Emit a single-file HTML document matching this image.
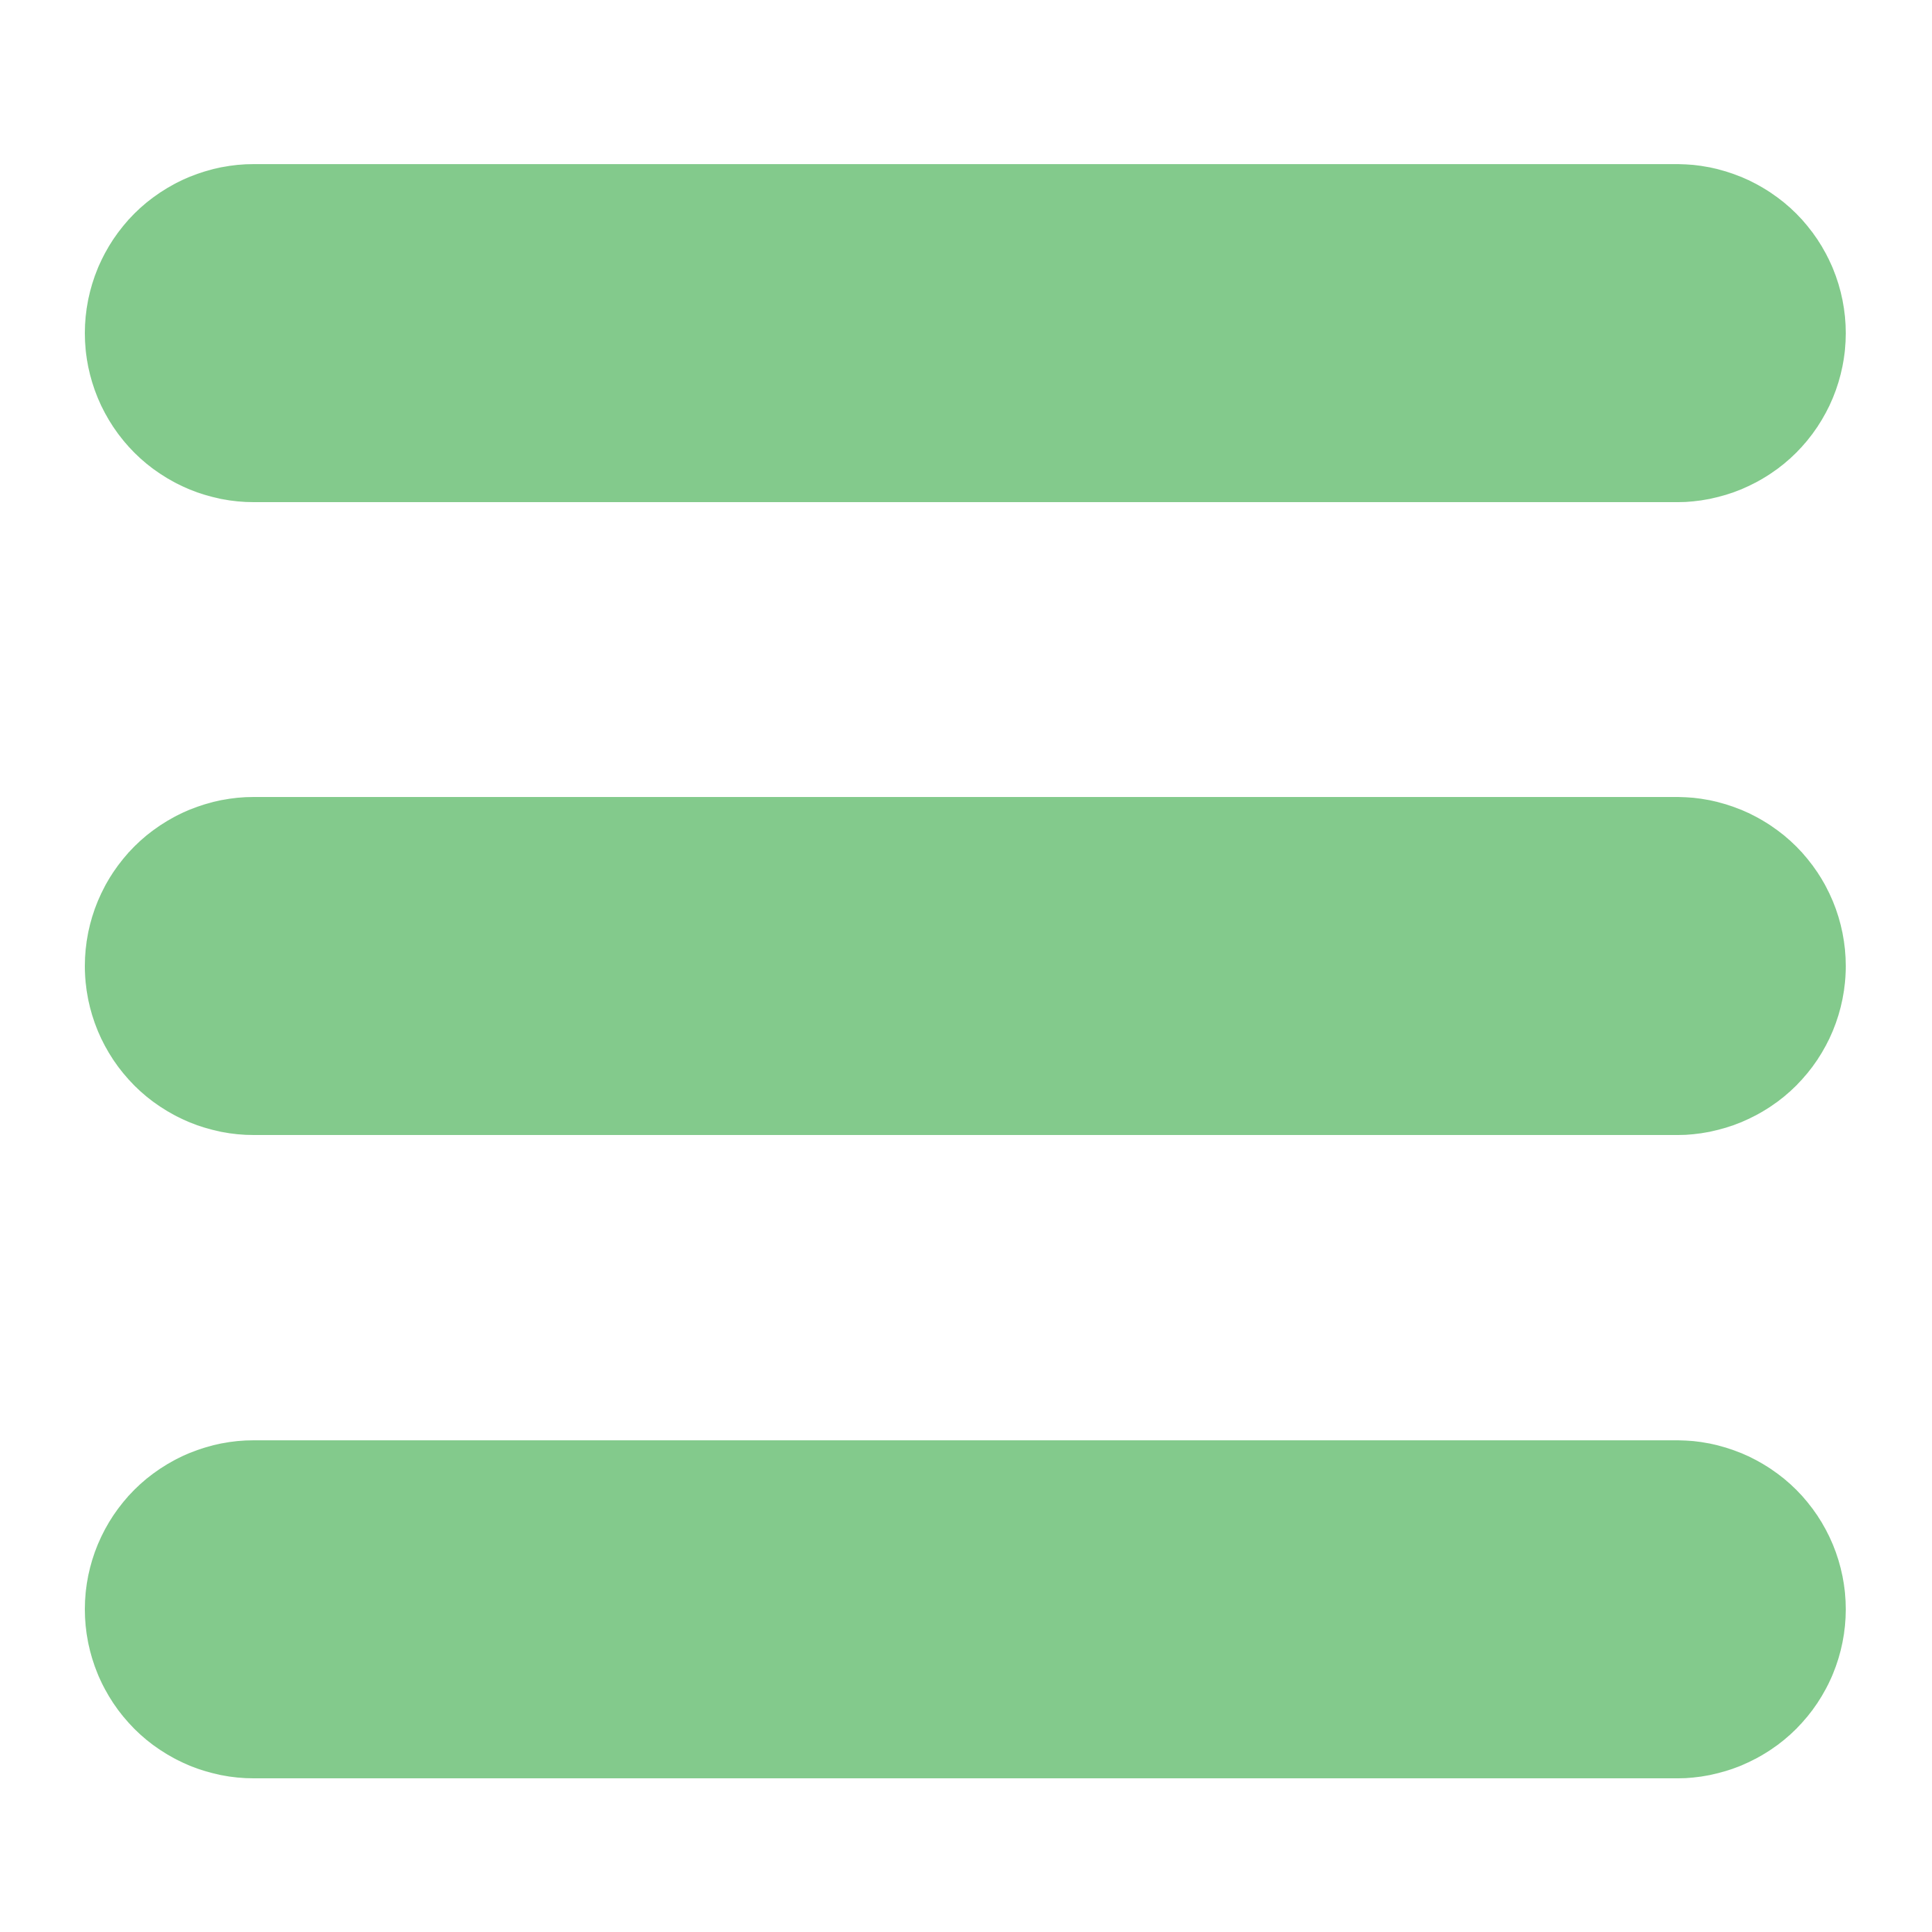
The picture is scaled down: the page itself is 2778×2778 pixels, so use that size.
<!DOCTYPE html>
<html><head><style>
html,body{margin:0;padding:0;background:#fff;width:2778px;height:2778px;overflow:hidden}
.b{position:absolute;left:122px;width:2532px;height:486px;border-radius:243px;background:#83ca8c}
</style></head><body>
<div class="b" style="top:236px"></div>
<div class="b" style="top:1146px"></div>
<div class="b" style="top:2071px"></div>
</body></html>
